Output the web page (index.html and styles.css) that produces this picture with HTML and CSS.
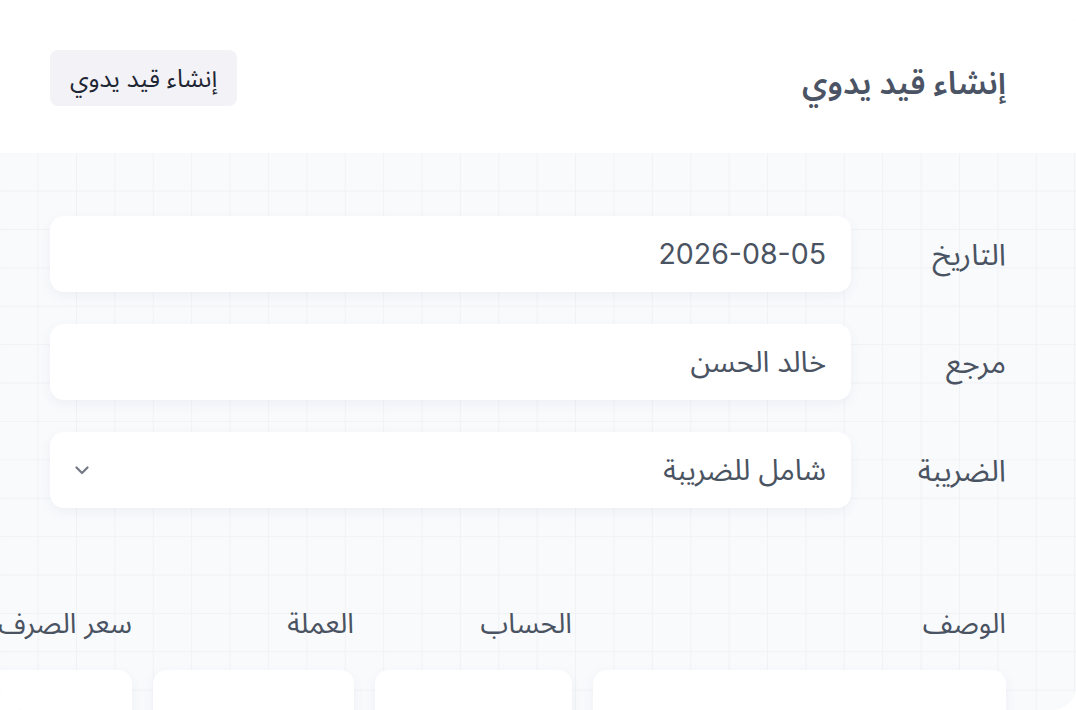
FILE: index.html
```html
<!DOCTYPE html>
<html lang="ar" dir="rtl">
<head>
<meta charset="utf-8">
<title>إنشاء قيد يدوي</title>
<link rel="stylesheet" href="styles.css">
</head>
<body>
<div class="card">
  <header class="head">
    <h1 class="title">إنشاء قيد يدوي</h1>
    <button class="btn" type="button">إنشاء قيد يدوي</button>
  </header>
  <main class="content">
    <div class="form">
      <div class="row">
        <label class="label">التاريخ</label>
        <div class="field"><span class="num">2026-08-05</span></div>
      </div>
      <div class="row">
        <label class="label">مرجع</label>
        <div class="field">خالد الحسن</div>
      </div>
      <div class="row">
        <label class="label">الضريبة</label>
        <div class="field select">
          <span>شامل للضريبة</span>
          <svg class="chev" width="16" height="16" viewBox="0 0 16 16" aria-hidden="true"><path d="M2.5 5.5 L8 11 L13.5 5.5" fill="none" stroke="#767b87" stroke-width="2.3" stroke-linecap="round" stroke-linejoin="round"/></svg>
        </div>
      </div>
    </div>
    <div class="lines">
      <div class="th">الوصف</div>
      <div class="th">الحساب</div>
      <div class="th">العملة</div>
      <div class="th">سعر الصرف</div>
      <div class="cell"></div>
      <div class="cell"></div>
      <div class="cell"></div>
      <div class="cell"></div>
    </div>
  </main>
</div>
</body>
</html>
```
FILE: styles.css
```css
* { box-sizing: border-box; }
html, body { margin: 0; padding: 0; background: #ffffff; }
body {
  font-family: Inter, "Noto Sans Arabic", "DejaVu Sans", sans-serif;
  color: #4a5362;
}
.card {
  width: 1076px;
  height: 710px;
  border-radius: 24px;
  overflow: hidden;
  background: #f9fafc;
  display: flex;
  flex-direction: column;
}
.head {
  height: 153px;
  flex: none;
  background: #ffffff;
  display: flex;
  align-items: center;
  justify-content: space-between;
  padding: 0 70px 0 50px;
}
.title {
  margin: 13px 0 0 0;
  font-size: 32px;
  line-height: 1.3;
  font-weight: 600;
  color: #4b5465;
}
.btn {
  height: 56px;
  margin-top: 3px;
  padding: 0 20px;
  border: none;
  border-radius: 8px;
  background: #f3f3f7;
  color: #1f2633;
  font-family: inherit;
  font-size: 24.5px;
  line-height: 1;
}
.content {
  flex: 1;
  padding: 63px 70px 0 50px;
  background-color: #f9fafc;
  background-image:
    linear-gradient(to right, #f1f2f6 1px, transparent 1px),
    linear-gradient(to bottom, #f1f2f6 1px, transparent 1px);
  background-size: 38.4px 38.4px;
  background-position: 37.6px 37.6px;
}
.form {
  display: flex;
  flex-direction: column;
  gap: 32px;
}
.row {
  display: grid;
  grid-template-columns: 123px 1fr;
  column-gap: 32px;
  align-items: center;
}
.label {
  font-size: 30px;
  line-height: 1.3;
  color: #4a5362;
}
.field {
  height: 76px;
  background: #ffffff;
  border-radius: 14px;
  box-shadow: 0 4px 12px rgba(90, 95, 150, 0.07);
  display: flex;
  align-items: center;
  padding: 0 25px;
  font-size: 29px;
  line-height: 1.3;
  color: #4a5362;
}
.num { font-size: 28.5px; }
.select { justify-content: space-between; padding-left: 24px; }
.lines {
  margin-top: 90px;
  display: grid;
  grid-template-columns: 413px 197px 201px 200px;
  grid-template-rows: 52px 76px;
  column-gap: 21px;
  row-gap: 20px;
}
.th {
  font-size: 28px;
  color: #4a5362;
  display: flex;
  align-items: center;
  white-space: nowrap;
}
.cell {
  background: #ffffff;
  border-radius: 14px;
  box-shadow: 0 4px 12px rgba(90, 95, 150, 0.07);
}
```
